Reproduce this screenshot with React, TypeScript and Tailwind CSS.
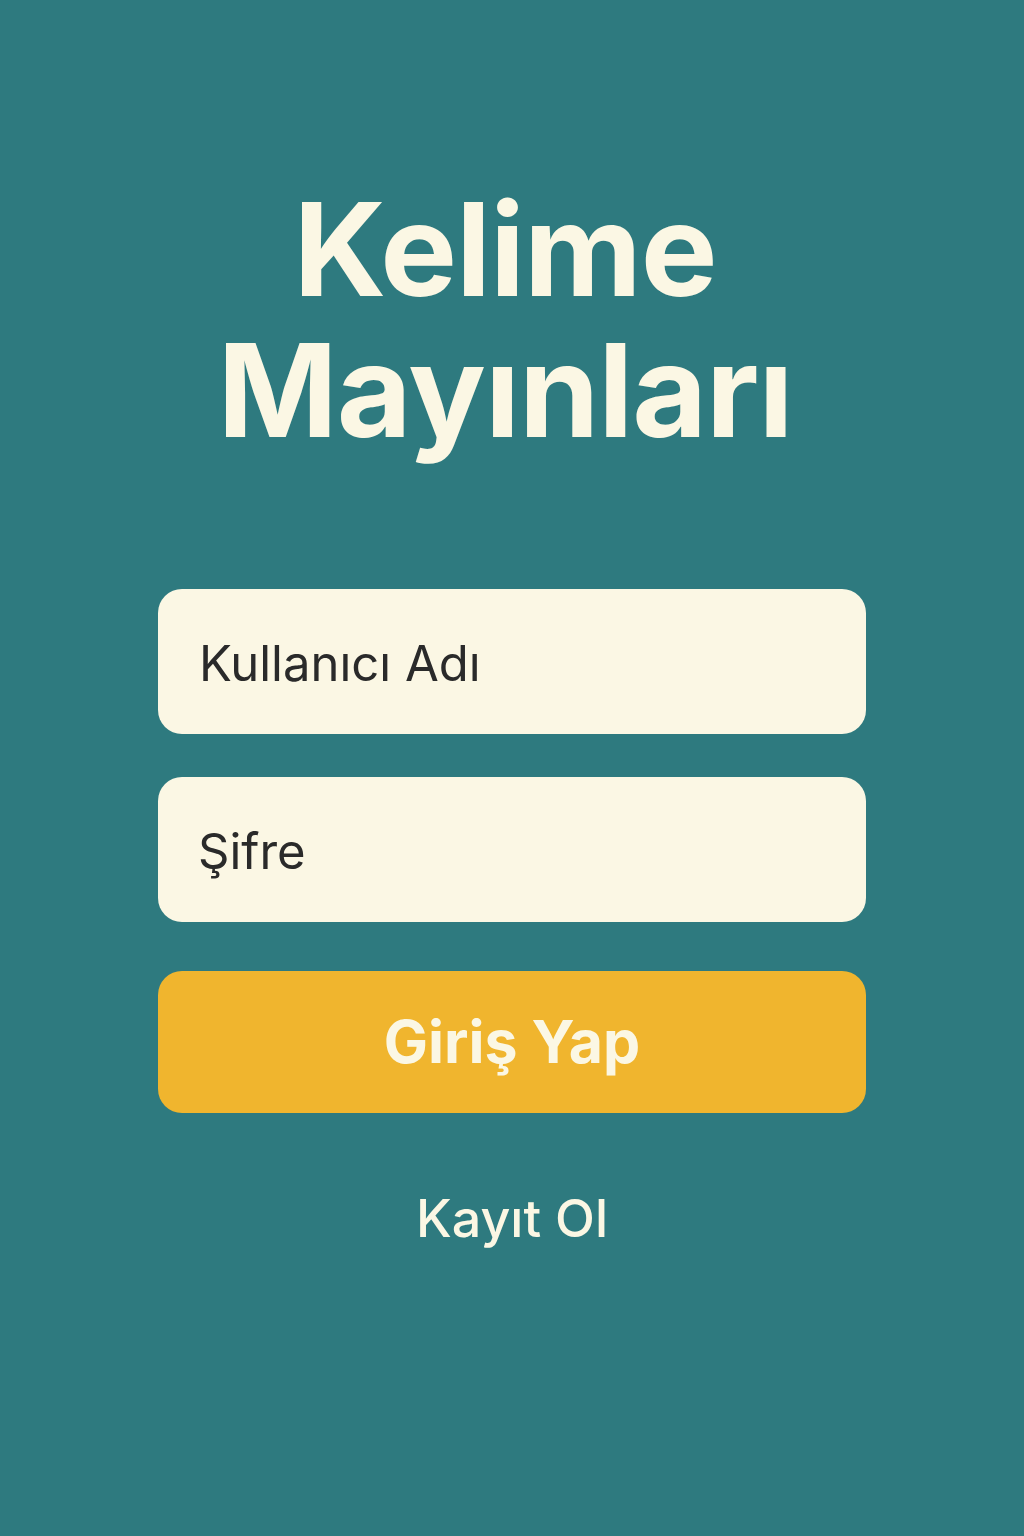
import React from "react";

export default function App() {
  return (
    <div
      className="min-h-[1536px] w-full bg-[#2E7A7F] flex flex-col items-center"
      style={{ fontFamily: "Inter, 'Noto Sans', sans-serif" }}
    >
      <h1 className="mt-[179px] pr-[14px] text-center text-[129px] leading-[141px] font-bold text-[#FBF7E4] tracking-[-1px]">
        Kelime
        <br />
        Mayınları
      </h1>
      <div className="mt-[128px] w-[708px] flex flex-col">
        <div className="h-[145px] rounded-[24px] bg-[#FBF7E4] flex items-center pl-[41px] pt-[5px] text-[49px] text-[#2a2a2a]">
          Kullanıcı Adı
        </div>
        <div className="mt-[43px] h-[145px] rounded-[24px] bg-[#FBF7E4] flex items-center pl-[40px] pt-[5px] text-[49px] text-[#2a2a2a]">
          Şifre
        </div>
        <button className="mt-[49px] h-[142px] rounded-[24px] bg-[#F0B52E] flex items-center justify-center text-[59px] font-bold text-[#FBF7E4]">
          Giriş Yap
        </button>
        <div className="mt-[67px] text-center text-[52px] font-medium text-[#FBF7E4]">
          Kayıt Ol
        </div>
      </div>
    </div>
  );
}
